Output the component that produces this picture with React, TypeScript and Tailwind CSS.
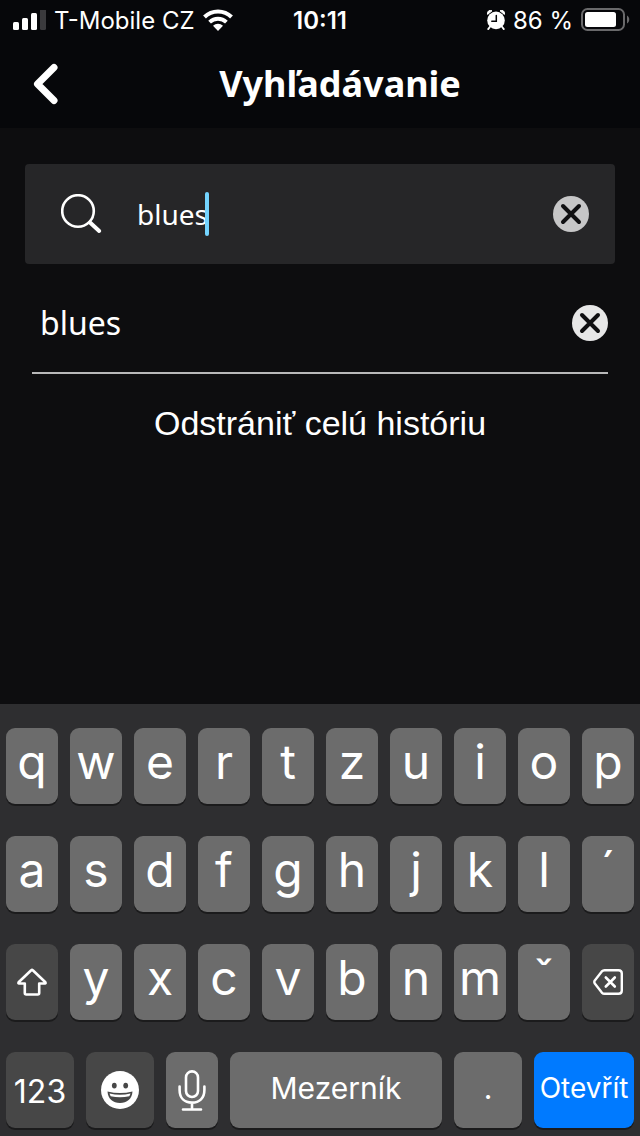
import { useState } from 'react'
import type { ReactNode } from 'react'
import clsx from 'clsx'

const ROWS = [
    ['q', 'w', 'e', 'r', 't', 'z', 'u', 'i', 'o', 'p'],
    ['a', 's', 'd', 'f', 'g', 'h', 'j', 'k', 'l', '´'],
    ['y', 'x', 'c', 'v', 'b', 'n', 'm', 'ˇ'],
]

function SignalIcon() {
    return (
        <svg width="34" height="22" viewBox="0 0 34 22" fill="white" aria-hidden="true">
            <rect x="1" y="12" width="6" height="8" rx="1.5" />
            <rect x="10" y="8" width="6" height="12" rx="1.5" />
            <rect x="19" y="3" width="6" height="17" rx="1.5" />
            <rect x="28" y="-1" width="6" height="21" rx="1.5" fill="#3a3a3d" />
        </svg>
    )
}

function WifiIcon() {
    return (
        <svg width="30" height="24" viewBox="0 0 30 24" fill="none" stroke="white" strokeWidth="4" aria-hidden="true">
            <path d="M1.5 8a19.2 19.2 0 0 1 27 0" />
            <path d="M6.6 13.2a12 12 0 0 1 16.8 0" strokeWidth="3.8" />
            <path d="M15 22l-5-5.2a7.3 7.3 0 0 1 10 0z" fill="white" stroke="none" />
        </svg>
    )
}

function AlarmIcon() {
    return (
        <svg width="18" height="22" viewBox="0 0 18 22" aria-hidden="true">
            <path d="M.6 4.4A3 3 0 0 1 5 .8zM17.4 4.4A3 3 0 0 0 13 .8z" fill="white" stroke="white" strokeLinejoin="round" />
            <path d="M3.2 16.5l-2 2.6M14.8 16.5l2 2.6" stroke="white" strokeWidth="1.8" strokeLinecap="round" />
            <circle cx="9" cy="10.4" r="8.8" fill="white" />
            <path d="M9.3 5.4v5.8H4.8" fill="none" stroke="#06070a" strokeWidth="1.5" strokeLinecap="round" />
        </svg>
    )
}

function BatteryIcon() {
    return (
        <svg width="49" height="26" viewBox="0 0 49 26" aria-hidden="true">
            <rect x="1" y="1" width="42" height="21" rx="5.5" fill="none" stroke="#69696b" strokeWidth="2" />
            <rect x="4" y="4" width="31" height="15" rx="2.5" fill="white" />
            <path d="M46 7.5c3 1.5 3 6.5 0 8z" fill="#69696b" />
        </svg>
    )
}

function ClearIcon({ className }: { className: string }) {
    return (
        <svg width="36" height="36" viewBox="0 0 36 36" aria-hidden="true" className={className}>
            <circle cx="18" cy="18" r="18" fill="currentColor" />
            <path d="M10 10l16 16M26 10L10 26" stroke="#0f0f11" strokeWidth="4" strokeLinecap="round" />
        </svg>
    )
}

interface KeyProps {
    children: ReactNode
    label?: string
    className?: string
}

function Key({ children, label, className }: KeyProps) {
    return (
        <button
            type="button"
            aria-label={label}
            className={clsx(
                'flex h-[76px] min-w-0 items-center justify-center rounded-[9px] shadow-[0_2px_0_#1b1b1c]',
                className,
            )}
        >
            {children}
        </button>
    )
}

function LetterKey({ letter }: { letter: string }) {
    return (
        <Key className="bg-[#6c6c6c] pb-2 text-5xl">
            {letter}
        </Key>
    )
}

function Keyboard() {
    return (
        <div className="mt-auto flex flex-col gap-8 bg-[#2e2e30] px-1.5 pt-6 pb-2 font-['Inter',sans-serif]">
            {ROWS.slice(0, 2).map((row) => (
                <div key={row[0]} className="grid grid-cols-10 gap-3">
                    {row.map((letter) => <LetterKey key={letter} letter={letter} />)}
                </div>
            ))}
            <div className="grid grid-cols-10 gap-3">
                <Key label="Shift" className="bg-[#474747]">
                    <svg width="30" height="28" viewBox="0 0 30 28" fill="none" stroke="white" strokeWidth="2.6" strokeLinejoin="round">
                        <path d="M14.2 2.3L1.6 14.3q-.6 1 .6 1.2H7.8V25q0 1.5 1.5 1.5h11.400q1.500 0 1.500-1.500v-9.500h5.600q1.200-.2.600-1.200L15.800 2.300q-.8-.8-1.600 0z" />
                    </svg>
                </Key>
                {ROWS[2].map((letter) => <LetterKey key={letter} letter={letter} />)}
                <Key label="Backspace" className="bg-[#474747]">
                    <svg width="30" height="26" viewBox="0 0 30 26" fill="none" stroke="white" strokeWidth="2.4" strokeLinecap="round" strokeLinejoin="round">
                        <path d="M11.5 1.2H25.5Q28.8 1.2 28.8 4.5V21.5Q28.8 24.8 25.5 24.8H11.5Q10 24.8 8.8 23.6L1.8 14.6Q.8 13 1.8 11.4L8.8 2.4Q10 1.2 11.5 1.2z" />
                        <path d="M12.8 8.5l9 9M21.8 8.5l-9 9" strokeWidth="2.6" />
                    </svg>
                </Key>
            </div>
            <div className="flex gap-3">
                <Key className="flex-[68] bg-[#474747] pt-1 text-[32px]">123</Key>
                <Key label="Emoji" className="flex-[68] bg-[#474747]">
                    <svg width="38" height="38" viewBox="0 0 38 38">
                        <circle cx="19" cy="19" r="19" fill="white" />
                        <ellipse cx="13.3" cy="14.6" rx="2.4" ry="2.9" fill="#474747" />
                        <ellipse cx="24.7" cy="14.6" rx="2.4" ry="2.9" fill="#474747" />
                        <path d="M6.5 20.5Q19 23.5 31.5 20.5C31 28 26 32 19 32S7 28 6.5 20.5z" fill="#474747" />
                        <path d="M8.5 22.5Q19 25 29.5 22.5Q29 24 28.3 25.2Q19 27.5 9.7 25.2Q9 24 8.5 22.5z" fill="white" />
                    </svg>
                </Key>
                <Key label="Diktovanie" className="flex-[52] bg-[#6c6c6c]">
                    <svg width="28" height="42" viewBox="0 0 28 42" fill="none" stroke="white" strokeWidth="2.6" strokeLinecap="round">
                        <rect x="8" y="2.4" width="12" height="25.6" rx="6" />
                        <path d="M1.6 17.5V21C1.6 29 6.5 33.6 14 33.6S26.4 29 26.4 21V17.5M14 33.6V40.5M5 40.5H23" />
                    </svg>
                </Key>
                <Key className="flex-[212] bg-[#6c6c6c] pb-1 text-[30px]">Mezerník</Key>
                <Key className="flex-[68] bg-[#6c6c6c] pb-1 text-[30px]">.</Key>
                <Key className="flex-[100] bg-[#007aff] pb-1 text-[28px]">Otevřít</Key>
            </div>
        </div>
    )
}

export default function App() {
    const [query, setQuery] = useState('blues')
    const [history, setHistory] = useState(['blues'])

    return (
        <div className="flex min-h-screen flex-col bg-[#0d0d0f] font-['Noto_Sans',sans-serif] text-white">
            <div className="bg-[#06070a]">
                <div className="grid h-10 grid-cols-[1fr_auto_1fr] items-center pt-0.5 pr-3 pl-3 font-['Inter',sans-serif] text-2xl">
                    <div className="flex items-center gap-2">
                        <SignalIcon />
                        <span>T-Mobile CZ</span>
                        <WifiIcon />
                    </div>
                    <span className="font-semibold">10:11</span>
                    <div className="-mr-0.5 flex items-center justify-end gap-2">
                        <AlarmIcon />
                        <span>86 %</span>
                        <BatteryIcon />
                    </div>
                </div>
                <header className="grid h-[88px] grid-cols-[56px_1fr] items-center pr-6 pl-8">
                    <button type="button" aria-label="Späť" className="flex justify-start">
                        <svg width="28" height="42" viewBox="0 0 28 42" fill="none" stroke="white" strokeWidth="7" strokeLinecap="round" strokeLinejoin="round">
                            <path d="M22 4.5L5.5 21l16.5 16.5" />
                        </svg>
                    </button>
                    <h1 className="pr-6 text-center text-4xl font-bold">Vyhľadávanie</h1>
                </header>
            </div>

            <main className="flex flex-col pt-9">
                <div className="mx-[25px] flex h-[100px] items-center rounded bg-[#262628] pr-[26px] pl-9">
                    <svg width="42" height="40" viewBox="0 0 42 40" fill="none" stroke="white" aria-hidden="true">
                        <circle cx="17" cy="17" r="15.8" strokeWidth="2.6" />
                        <path d="M29 28.5l9.2 8.5" strokeWidth="4" strokeLinecap="round" />
                    </svg>
                    <label className="ml-[34px] flex min-w-0 flex-1 items-center">
                        <input
                            type="text"
                            aria-label="Vyhľadávanie"
                            value={query}
                            onChange={(e) => setQuery(e.target.value)}
                            className="field-sizing-content max-w-full bg-transparent text-[28px] caret-transparent outline-none"
                        />
                        <span className="-ml-[3px] h-11 w-1 rounded-full bg-[#74d4ff]" />
                    </label>
                    <button type="button" aria-label="Vymazať" onClick={() => setQuery('')}>
                        <ClearIcon className="text-[#c6c6c7]" />
                    </button>
                </div>

                <ul className="mx-8 mt-2">
                    {history.map((item) => (
                        <li key={item} className="flex h-[102px] items-center justify-between border-b-2 border-[#b8b8b9] pt-0.5 pl-2">
                            <span className="text-[32px]">{item}</span>
                            <button
                                type="button"
                                aria-label={`Odstrániť ${item}`}
                                onClick={() => setHistory(history.filter((h) => h !== item))}
                            >
                                <ClearIcon className="text-[#e7e7e7]" />
                            </button>
                        </li>
                    ))}
                </ul>

                <button
                    type="button"
                    onClick={() => setHistory([])}
                    className="mt-6 self-center font-['Liberation_Sans',sans-serif] text-[34px]"
                >
                    Odstrániť celú históriu
                </button>
            </main>

            <Keyboard />
        </div>
    )
}
